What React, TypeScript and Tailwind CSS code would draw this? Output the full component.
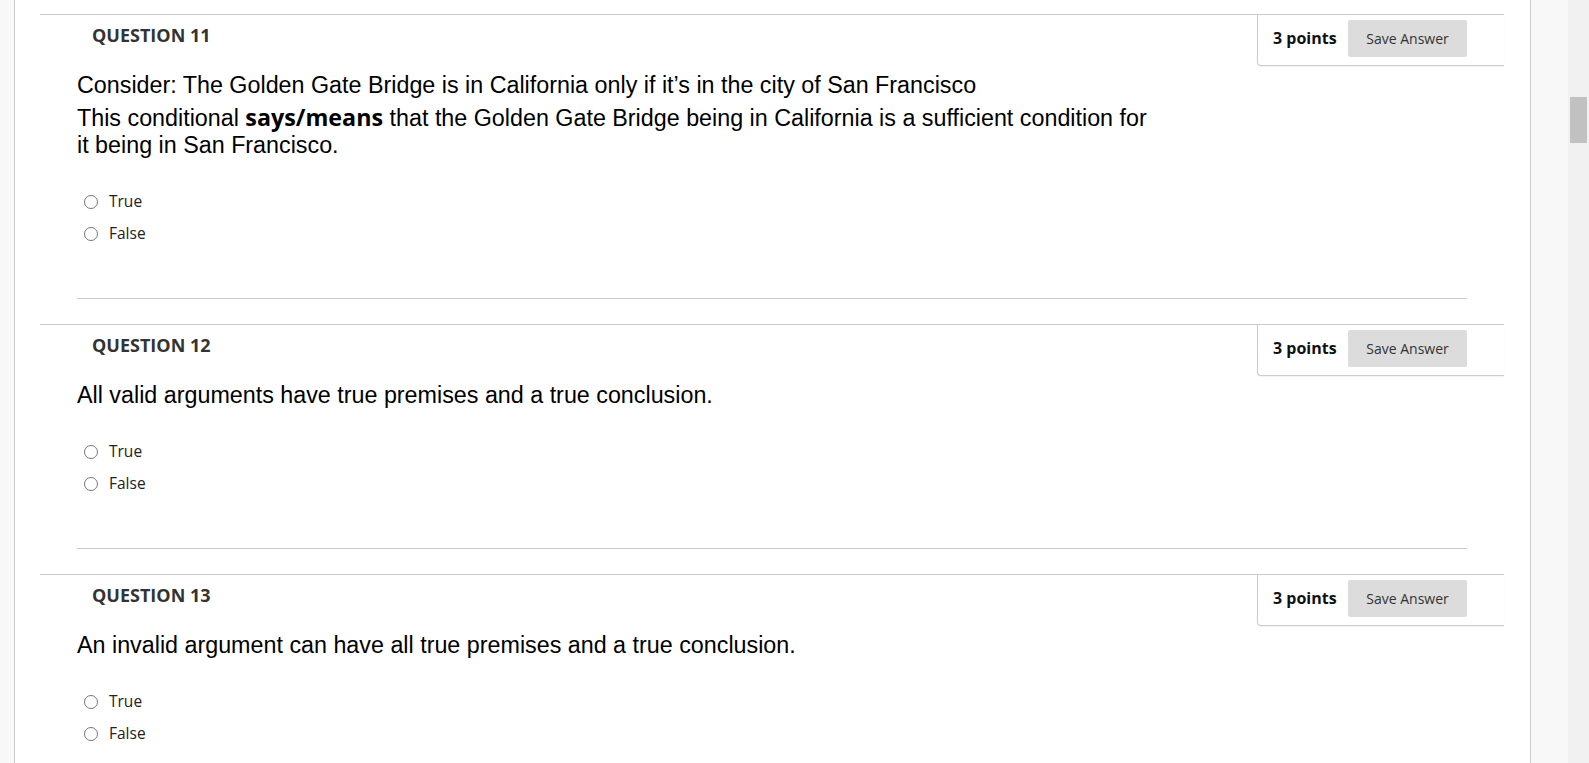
import React from 'react';

type Question = {
  num: number;
  body: React.ReactNode;
};

const questions: Question[] = [
  {
    num: 11,
    body: (
      <>
        <p>Consider: The Golden Gate Bridge is in California only if it’s in the city of San Francisco</p>
        <p className="mt-[6px]">
          This conditional{' '}
          <strong className="font-bold leading-none" style={{ fontFamily: '"Open Sans", sans-serif' }}>
            says/means
          </strong>{' '}
          that the Golden Gate Bridge being in California is a sufficient condition for it being in San Francisco.
        </p>
      </>
    ),
  },
  {
    num: 12,
    body: <p>All valid arguments have true premises and a true conclusion.</p>,
  },
  {
    num: 13,
    body: <p>An invalid argument can have all true premises and a true conclusion.</p>,
  },
];

function Radio({ label }: { label: string }) {
  return (
    <label className="flex h-[32px] items-center pl-[44px]">
      <span className="h-[14px] w-[14px] rounded-full border-[1.5px] border-[#767676] bg-white" />
      <span className="ml-[11px] text-[15.5px] text-[#222]">{label}</span>
    </label>
  );
}

function QuestionBlock({ q }: { q: Question }) {
  return (
    <div className="border-t border-[#cccccc]">
      <div className="flex items-start justify-between">
        <h3 className="pl-[52px] pt-[7px] text-[18px] font-bold leading-[26px] text-[#333]">
          QUESTION {q.num}
        </h3>
        <div className="flex h-[51px] w-[247px] items-start rounded-bl-[4px] border-b border-l border-[#cccccc] pl-[15px] pt-[5px] shadow-[0_1px_2px_rgba(0,0,0,0.06)]">
          <span className="mt-[7px] text-[16px] font-bold leading-[22px] text-[#111]">3 points</span>
          <button className="ml-auto mr-[37px] h-[37px] w-[119px] rounded-[2px] bg-[#dcdcdc] text-[14px] text-[#333]">
            Save Answer
          </button>
        </div>
      </div>
      <div
        className="mt-[6px] w-[1118px] pl-[37px] text-[23.3px] leading-[27px] text-black"
        style={{ fontFamily: '"Liberation Sans", Arial, sans-serif' }}
      >
        {q.body}
      </div>
      <div className="mt-[27px]">
        <Radio label="True" />
        <Radio label="False" />
      </div>
      <div className="mx-[37px] mt-[48px] mb-[25px] border-t border-[#cccccc]" />
    </div>
  );
}

export default function App() {
  return (
    <div
      className="flex h-[763px] w-[1589px] overflow-hidden bg-white"
      style={{ fontFamily: '"Open Sans", sans-serif' }}
    >
      <div className="w-[15px] shrink-0 border-r border-[#cccccc] bg-[#f8f8f8]" />
      <div className="flex-1 overflow-hidden border-r border-[#cccccc] pt-[14px]">
        <div className="ml-[25px] mr-[26px]">
          {questions.map((q) => (
            <QuestionBlock key={q.num} q={q} />
          ))}
        </div>
      </div>
      <div className="w-[37px] shrink-0 bg-[#f8f8f8]" />
      <div className="w-[21px] shrink-0 bg-[#f1f1f1] pt-[97px]">
        <div className="mx-auto h-[46px] w-[17px] bg-[#c1c1c1]" />
      </div>
    </div>
  );
}
